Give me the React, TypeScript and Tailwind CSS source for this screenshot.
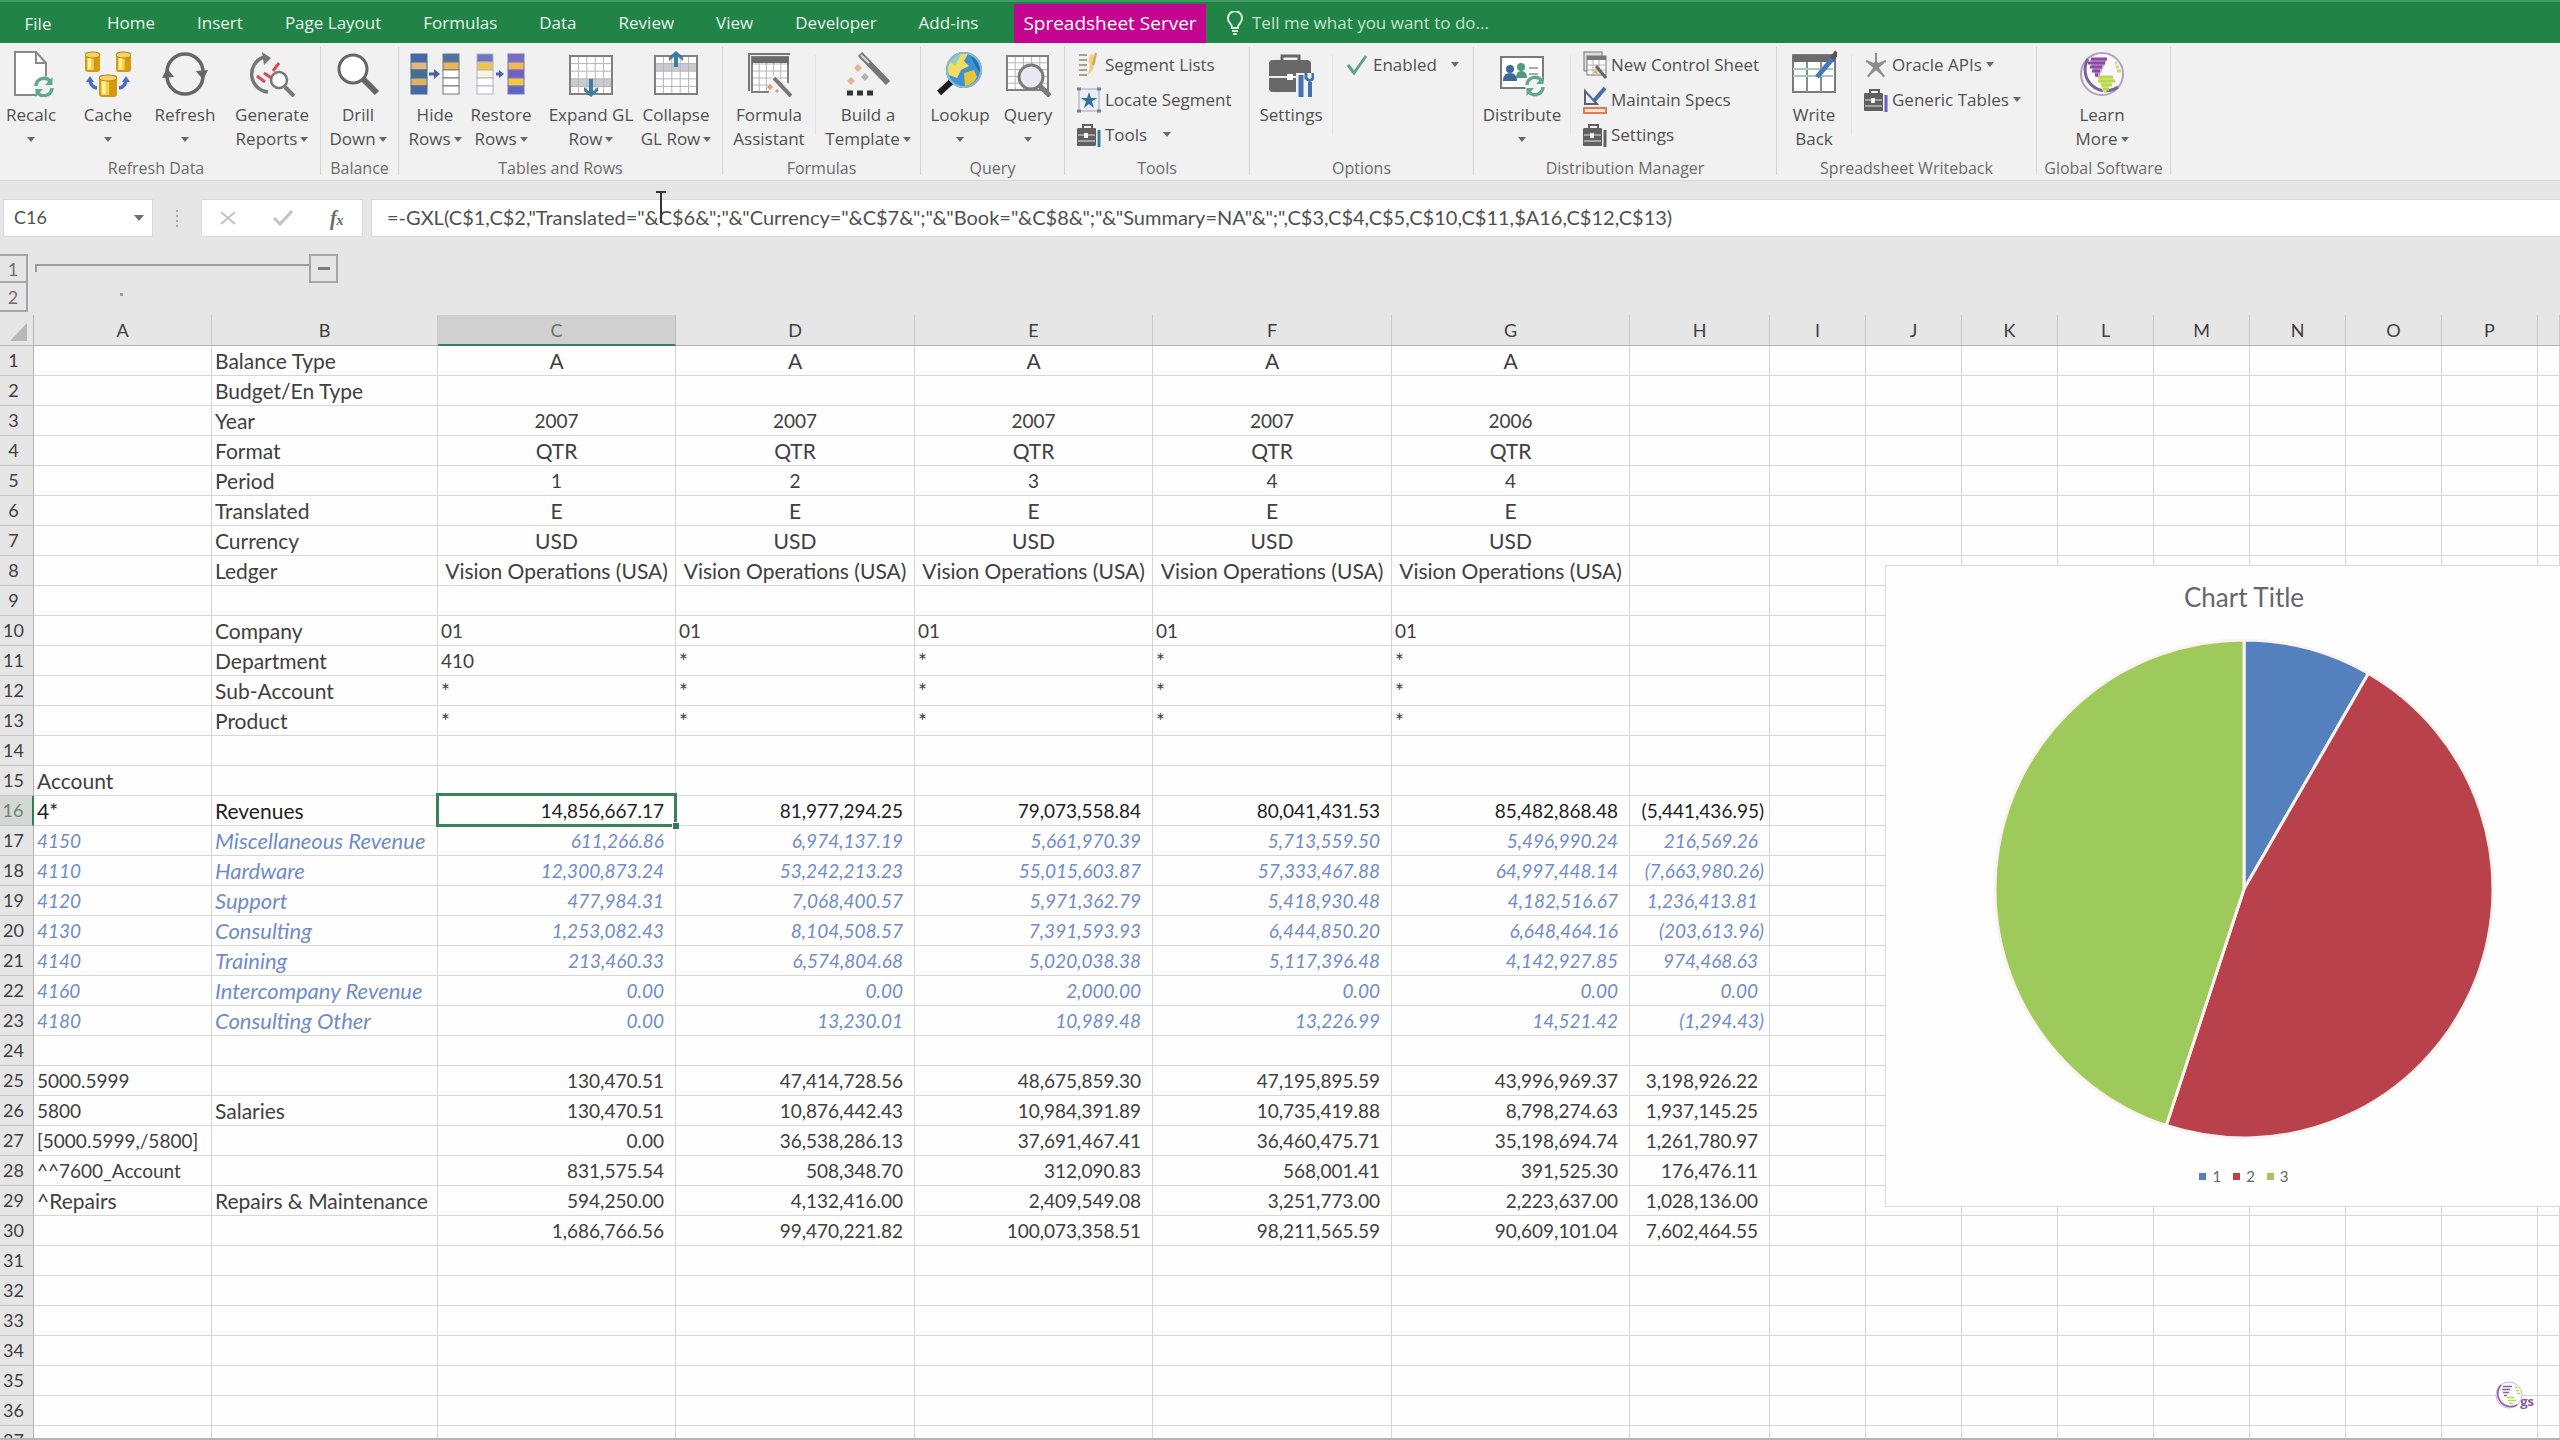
import type { ReactNode } from "react";

const GRAY = "#666666";

/* ---------- icons ---------- */

function Icon({ children, w = 46, h = 46 }: { children: ReactNode; w?: number; h?: number }) {
  return (
    <svg width={w} height={h} viewBox={`0 0 ${w} ${h}`} fill="none" aria-hidden="true" className="shrink-0">
      {children}
    </svg>
  );
}

function Caret() {
  return (
    <svg width="8" height="5" viewBox="0 0 8 5" aria-hidden="true" className="shrink-0">
      <path d="M0 0H8L4 5Z" fill="#6a6a6a" />
    </svg>
  );
}

function Sync({ x, y, r = 8 }: { x: number; y: number; r?: number }) {
  return (
    <g transform={`translate(${x} ${y}) scale(${r / 8})`} stroke="#5fa88c" strokeWidth="3.4">
      <path d="M-8 -1A8 8 0 0 1 6 -6" />
      <path d="M8 1A8 8 0 0 1 -6 6" />
      <path d="M8.500 -10V-2H1Z" fill="#5fa88c" stroke="none" />
      <path d="M-8.500 10V2H-1Z" fill="#5fa88c" stroke="none" />
    </g>
  );
}

function RecalcIcon() {
  return (
    <Icon>
      <path d="M7 1H28L38 12V44H7Z" fill="#fff" stroke="#8a8a8a" strokeWidth="2" />
      <path d="M28 1V12H38" stroke="#8a8a8a" strokeWidth="2" />
      <circle cx="36" cy="36" r="11" fill="#f1f1f1" />
      <Sync x={36} y={36} />
    </Icon>
  );
}

function Cylinder({ x, y, w, h }: { x: number; y: number; w: number; h: number }) {
  return (
    <g>
      <rect x={x} y={y} width={w} height={h} rx="3" fill="#d69a12" />
      <rect x={x + 2} y={y + 2} width={w * 0.45} height={h - 4} fill="#f7cf45" />
      <rect x={x + 3} y={y + 3} width={w * 0.2} height={h - 6} fill="#fff0a8" />
      <ellipse cx={x + w / 2} cy={y + 3} rx={w / 2} ry="3" fill="#f3d469" stroke="#b98512" />
    </g>
  );
}

function CacheIcon() {
  return (
    <Icon>
      <Cylinder x={0} y={1} w={15} h={20} />
      <Cylinder x={31} y={1} w={15} h={20} />
      <path d="M5 28Q5 36 12 37" stroke="#4b6fc6" strokeWidth="3.5" />
      <path d="M1 31L5 25L9 31Z" fill="#4b6fc6" />
      <path d="M41 28Q41 36 34 37" stroke="#4b6fc6" strokeWidth="3.5" />
      <path d="M37 31L41 25L45 31Z" fill="#4b6fc6" />
      <Cylinder x={14} y={24} w={18} h={22} />
    </Icon>
  );
}

function RefreshIcon() {
  return (
    <Icon>
      <path d="M5 21A18 18 0 0 1 41 21" stroke={GRAY} strokeWidth="3.500" />
      <path d="M5 25A18 18 0 0 0 41 25" stroke={GRAY} strokeWidth="3.500" />
      <path d="M0 27L5 17L12 26Z" fill={GRAY} />
      <path d="M34 20L41 29L46 19Z" fill={GRAY} />
    </Icon>
  );
}

function GenerateIcon() {
  return (
    <Icon>
      <path d="M19 41A18 18 0 0 1 15 6" stroke="#777" strokeWidth="3.500" />
      <path d="M13 1L22 7L15 14Z" fill="#777" />
      <path d="M24 20L30 12M8 25L16 31M15 22L24 28" stroke="#d64b5b" strokeWidth="3" />
      <circle cx="30" cy="29" r="8" fill="#fff" stroke="#777" strokeWidth="2.500" />
      <path d="M36 36L45 45" stroke="#777" strokeWidth="4" />
    </Icon>
  );
}

function DrillIcon() {
  return (
    <Icon>
      <circle cx="18" cy="18" r="14" fill="#fff" stroke={GRAY} strokeWidth="3" />
      <path d="M28 28L42 42" stroke={GRAY} strokeWidth="6" />
    </Icon>
  );
}

function Strip({ x, colors, line }: { x: number; colors: string[]; line: string }) {
  return (
    <g>
      {colors.map((c, i) => (
        <rect key={i} x={x} y={3 + i * 8} width="16" height="8" fill={c} stroke={line} strokeWidth="1" />
      ))}
    </g>
  );
}

function HideRowsIcon() {
  return (
    <Icon w={50}>
      <Strip x={1} colors={["#4668a8", "#e3b87a", "#3f7290", "#e3b060", "#4668a8"]} line="#4a6a9a" />
      <Strip x={33} colors={["#4c73a6", "#e6b560", "#fff", "#fff", "#fff"]} line="#777" />
      <path d="M19 23H26" stroke="#4a5fa0" strokeWidth="3" />
      <path d="M24 18L30 23L24 28Z" fill="#4a5fa0" />
    </Icon>
  );
}

function RestoreRowsIcon() {
  return (
    <Icon w={50}>
      <Strip x={1} colors={["#6e74c0", "#f2c24e", "#fdf3dd", "#fff", "#fff"]} line="#a9b3cc" />
      <Strip x={32} colors={["#7a6cc6", "#f0b84d", "#6b62c4", "#f2cb3c", "#5c66c0"]} line="#7a72c4" />
      <path d="M20 23H25" stroke="#4a5fb0" strokeWidth="3" />
      <path d="M23 19L28 23L23 27Z" fill="#4a5fb0" />
    </Icon>
  );
}

function Grid({ x, y, w, h, shade }: { x: number; y: number; w: number; h: number; shade?: number }) {
  const cw = w / 5;
  const rh = h / 5;
  return (
    <g>
      <rect x={x} y={y} width={w} height={h} fill="#fff" />
      {shade !== undefined && <rect x={x} y={y + rh * shade} width={w} height={rh} fill="#c9ccd3" />}
      <path
        d={[1, 2, 3, 4].map((i) => `M${x + cw * i} ${y}V${y + h}M${x} ${y + rh * i}H${x + w}`).join("")}
        stroke="#b5b5b5"
      />
      <rect x={x} y={y} width={w} height={h} stroke="#808080" strokeWidth="2" />
    </g>
  );
}

function ExpandIcon() {
  return (
    <Icon>
      <Grid x={2} y={5} w={42} h={38} shade={3} />
      <path d="M23 28V44" stroke="#3f7ca3" strokeWidth="4" />
      <path d="M16 36L23 42L30 36V40L23 46L16 40Z" fill="#3f7ca3" />
    </Icon>
  );
}

function CollapseIcon() {
  return (
    <Icon>
      <Grid x={2} y={5} w={42} h={38} shade={1} />
      <path d="M23 2V16" stroke="#3f7ca3" strokeWidth="4" />
      <path d="M16 10L23 4L30 10V6L23 0L16 6Z" fill="#3f7ca3" />
    </Icon>
  );
}

function FormulaIcon() {
  return (
    <Icon>
      <path d="M3 40V3H44" stroke="#777" strokeWidth="2" />
      <Grid x={6} y={6} w={36} h={35} />
      <rect x="6" y="6" width="37" height="6" fill="#6a6a6a" />
      <path d="M22 46L26 24L46 34V46Z" fill="#f1f1f1" />
      <path d="M28 27L45 45" stroke="#777" strokeWidth="4" />
      <path d="M24 33L27 36L24 39L21 36ZM31 38L33 40L31 42L29 40Z" fill="#d6a07c" />
    </Icon>
  );
}

function BuildIcon() {
  return (
    <Icon>
      <path d="M15 3L43 32" stroke="#777" strokeWidth="6" />
      <path d="M16 4L24 12" stroke="#ddd" strokeWidth="2" />
      <path d="M13 13L17 17L13 21L9 17ZM6 26L10 30L6 34L2 30Z" fill="#e7b491" />
      <path d="M20 22L24 26L20 30L16 26Z" fill="#b3b3b3" />
      <path d="M2 42H8M12 42H18M22 42H28" stroke="#333" strokeWidth="5" />
    </Icon>
  );
}

function LookupIcon() {
  return (
    <Icon>
      <path d="M2 42L14 31" stroke="#1c1c1c" strokeWidth="6" />
      <circle cx="27" cy="19" r="18" fill="#3d93cf" />
      <path d="M15 8Q23 0 31 3L27 10L32 15L24 19L20 27L12 24Q8 15 15 8Z" fill="#f2dc63" />
      <path d="M27 22L37 19L40 26Q36 34 28 35Z" fill="#e8c33c" />
      <path d="M34 5Q44 11 43 22L38 14Z" fill="#256fb0" />
      <path d="M13 11Q17 4 24 4L18 14Z" fill="#8ed0c4" />
      <circle cx="27" cy="19" r="17" stroke="#8bb8c9" strokeWidth="2" />
    </Icon>
  );
}

function QueryIcon() {
  return (
    <Icon>
      <Grid x={2} y={5} w={41} h={34} />
      <circle cx="26" cy="26" r="12" fill="#e6e8f3" stroke="#7b7b7b" strokeWidth="3" />
      <path d="M35 35L45 45" stroke="#7b7b7b" strokeWidth="5" />
    </Icon>
  );
}

function SettingsIcon() {
  return (
    <Icon>
      <path d="M14 9V5H31V9" stroke="#686868" strokeWidth="3" />
      <rect x="1" y="9" width="42" height="32" rx="4" fill="#686868" />
      <path d="M1 26H43" stroke="#f1f1f1" strokeWidth="2" />
      <rect x="19" y="23" width="6" height="6" fill="#fff" />
      <rect x="28" y="22" width="18" height="24" fill="#f1f1f1" />
      <path d="M33 24V46" stroke="#3f71b3" strokeWidth="5" />
      <path d="M42 31V46" stroke="#3f71b3" strokeWidth="4" />
      <path d="M38 22V27Q42 32 45 27V22" stroke="#3f71b3" strokeWidth="3" />
    </Icon>
  );
}

function DistributeIcon() {
  return (
    <Icon>
      <rect x="2" y="6" width="42" height="31" fill="#fff" stroke="#7b7b7b" strokeWidth="2" />
      <circle cx="11" cy="18" r="4" fill="#3d6a9e" />
      <path d="M4 30Q4 22 11 22Q18 22 18 30Z" fill="#3d6a9e" />
      <circle cx="22" cy="16" r="4" fill="#4f9b7c" />
      <path d="M17 27Q17 20 22 20Q28 20 28 27Z" fill="#4f9b7c" />
      <path d="M30 17H39M30 23H39" stroke="#aaa" strokeWidth="2" />
      <circle cx="36" cy="35" r="10" fill="#f1f1f1" />
      <Sync x={36} y={35} />
    </Icon>
  );
}

function WriteIcon() {
  return (
    <Icon>
      <rect x="2" y="4" width="42" height="37" fill="#fff" stroke="#7b7b7b" strokeWidth="2" />
      <rect x="2" y="4" width="42" height="7" fill="#6b6b6b" />
      <path d="M16 11V41M30 11V41" stroke="#8c8c8c" strokeWidth="2" />
      <path d="M2 18H42M2 25H42" stroke="#a5c9bb" strokeWidth="2" />
      <path d="M26 26L43 6" stroke="#4479bd" strokeWidth="5" />
      <path d="M41 8L46 1" stroke="#555" strokeWidth="5" />
    </Icon>
  );
}

function SegmentIcon() {
  return (
    <Icon w={24} h={28}>
      <path d="M2 4H10M2 9H10M2 14H10M2 19H10M2 24H10" stroke="#a9a28f" strokeWidth="2" />
      <path d="M14 3Q20 5 19 10L15 20L11 24L13 14Q10 8 14 3Z" fill="#edcf83" />
      <path d="M19 2L16 14" stroke="#c9a95c" strokeWidth="2" />
    </Icon>
  );
}

function LocateIcon() {
  return (
    <Icon w={24} h={28}>
      <rect x="2" y="3" width="20" height="22" fill="#e9edf6" stroke="#9aa6bd" />
      <path d="M12 6L14 12H20L15 15.500L17 22L12 18L7 22L9 15.500L4 12H10Z" fill="#33719c" />
      <path d="M0 3H4M20 3H24M0 25H4M20 25H24" stroke="#77808f" strokeWidth="3" />
    </Icon>
  );
}

function ToolboxIcon({ accent }: { accent: string }) {
  return (
    <Icon w={24} h={28}>
      <path d="M6 8V4H15V8" stroke="#606060" strokeWidth="2" />
      <rect x="0" y="7" width="19" height="18" rx="1" fill="#606060" />
      <path d="M1 14H18M1 20H18" stroke="#e4e4e4" strokeWidth="1" />
      <rect x="7" y="12" width="4" height="5" fill="#fff" />
      <path d="M22 9V26" stroke={accent} strokeWidth="3" />
    </Icon>
  );
}

function CheckIcon() {
  return (
    <Icon w={24} h={28}>
      <path d="M3 14L9 22L21 5" stroke="#5ba286" strokeWidth="3" />
    </Icon>
  );
}

function NewSheetIcon() {
  return (
    <Icon w={24} h={28}>
      <rect x="1" y="1" width="18" height="19" fill="#ddd" stroke="#777" />
      <rect x="4" y="5" width="19" height="19" fill="#fff" stroke="#777" />
      <rect x="4" y="5" width="19" height="4" fill="#777" />
      <path d="M10 9V24M16 9V24M4 14H23M4 19H23" stroke="#b0b0b0" />
      <path d="M13 15L23 27" stroke="#666" strokeWidth="3" />
      <path d="M10 22L13 18L15 23Z" fill="#e2ac59" />
    </Icon>
  );
}

function SpecsIcon() {
  return (
    <Icon w={24} h={28}>
      <path d="M2 18V5L14 18Z" stroke="#5b5f77" strokeWidth="2" />
      <path d="M11 15L22 2" stroke="#466fae" strokeWidth="4" />
      <rect x="1" y="22" width="22" height="5" fill="#fbe2d8" stroke="#e07a55" strokeWidth="2" />
    </Icon>
  );
}

function OracleIcon() {
  return (
    <Icon w={24} h={28}>
      <path
        d="M12 2V14M2 10L12 14L22 10M12 14L4 26M12 14L20 26M3 10L20 25M21 10L4 25"
        stroke="#8e8e8e"
        strokeWidth="2"
      />
      <circle cx="12" cy="14" r="3" fill="#8a8a8a" />
    </Icon>
  );
}

function GlobeIcon() {
  return (
    <Icon w={48}>
      <circle cx="24" cy="23" r="21" fill="#fbf8fd" stroke="#b3a0c2" strokeWidth="2" />
      <path d="M10 8A21 21 0 0 0 40 36" stroke="#7a6590" strokeWidth="3" />
      <path d="M12 9L29 8L21 26H18Z" fill="#c79bd0" />
      <path d="M13 8H29M10 12H27M12 16H24M14 20H22M17 24H20" stroke="#8c4a9e" strokeWidth="3" />
      <path d="M20 26H36L28 41H25Z" fill="#d9ea94" />
      <path d="M20 26H35M20 30H37M23 34H34M25 38H31" stroke="#b7d84b" strokeWidth="3" />
      <path d="M37 12H39M38 16H41M39 20H43" stroke="#c6dd6e" strokeWidth="3" />
    </Icon>
  );
}

/* ---------- ribbon ---------- */

function BigButton({
  icon,
  line1,
  line2 = "",
  caret = true,
  className,
}: {
  icon: ReactNode;
  line1: string;
  line2?: string;
  caret?: boolean;
  className: string;
}) {
  return (
    <button type="button" className={`flex shrink-0 flex-col items-center pt-2 ${className}`}>
      {icon}
      <span className="mt-1.5 h-6 leading-6 whitespace-nowrap">{line1}</span>
      <span className="flex h-6 items-center gap-[3px] leading-6 whitespace-nowrap">
        {line2}
        {caret && <Caret />}
      </span>
    </button>
  );
}

function SmallButton({ icon, label, caret = "" }: { icon: ReactNode; label: string; caret?: string }) {
  return (
    <button type="button" className="flex h-[35px] items-center gap-1 whitespace-nowrap">
      {icon}
      {label}
      {caret && (
        <span className={caret}>
          <Caret />
        </span>
      )}
    </button>
  );
}

function Group({ label, className, children }: { label: string; className: string; children: ReactNode }) {
  return (
    <section aria-label={label} className={`flex shrink-0 flex-col ${className}`}>
      <div className="flex h-[113px]">{children}</div>
      <div className="h-6 text-center text-base leading-6 whitespace-nowrap text-[#6b6b6b]">{label}</div>
    </section>
  );
}

function Divider({ short = false }: { short?: boolean }) {
  return short ? (
    <div className="mt-3 h-20 w-px shrink-0 bg-[#e4e4e4]" />
  ) : (
    <div className="mt-1 h-32 w-px shrink-0 bg-[#d4d4d4]" />
  );
}

function Ribbon() {
  return (
    <div className="flex h-[138px] shrink-0 overflow-hidden border-b border-[#d6d6d6] bg-[#f1f1f1] text-[17px] text-[#505050]">
      <Group label="Refresh Data" className="w-[320px] pr-2">
        <BigButton className="w-[62px]" icon={<RecalcIcon />} line1="Recalc" />
        <BigButton className="w-[92px]" icon={<CacheIcon />} line1="Cache" />
        <BigButton className="w-[62px]" icon={<RefreshIcon />} line1="Refresh" />
        <BigButton className="w-[104px] pl-2" icon={<GenerateIcon />} line1="Generate" line2="Reports" />
      </Group>
      <Divider />
      <Group label="Balance" className="w-[77px]">
        <BigButton className="w-[74px]" icon={<DrillIcon />} line1="Drill" line2="Down" />
      </Group>
      <Divider />
      <Group label="Tables and Rows" className="w-[323px]">
        <BigButton className="w-[72px]" icon={<HideRowsIcon />} line1="Hide" line2="Rows" />
        <BigButton className="w-[60px]" icon={<RestoreRowsIcon />} line1="Restore" line2="Rows" />
        <BigButton className="w-[120px]" icon={<ExpandIcon />} line1="Expand GL" line2="Row" />
        <BigButton className="w-[50px]" icon={<CollapseIcon />} line1="Collapse" line2="GL Row" />
      </Group>
      <Divider />
      <Group label="Formulas" className="w-[197px]">
        <BigButton className="w-[92px]" icon={<FormulaIcon />} line1="Formula" line2="Assistant" caret={false} />
        <Divider short />
        <BigButton className="w-[104px]" icon={<BuildIcon />} line1="Build a" line2="Template" />
      </Group>
      <Divider />
      <Group label="Query" className="w-[143px]">
        <BigButton className="w-[78px]" icon={<LookupIcon />} line1="Lookup" />
        <BigButton className="w-[58px]" icon={<QueryIcon />} line1="Query" />
      </Group>
      <Divider />
      <Group label="Tools" className="w-[184px]">
        <div className="flex flex-col items-start pt-1 pl-3">
          <SmallButton icon={<SegmentIcon />} label="Segment Lists" />
          <SmallButton icon={<LocateIcon />} label="Locate Segment" />
          <SmallButton icon={<ToolboxIcon accent="#3b7ca6" />} label="Tools" caret="ml-3" />
        </div>
      </Group>
      <Divider />
      <Group label="Options" className="w-[223px]">
        <BigButton className="w-[82px]" icon={<SettingsIcon />} line1="Settings" caret={false} />
        <Divider short />
        <div className="flex flex-col items-start pt-1 pl-3">
          <SmallButton icon={<CheckIcon />} label="Enabled" caret="ml-2.5" />
        </div>
      </Group>
      <Divider />
      <Group label="Distribution Manager" className="w-[302px]">
        <BigButton className="w-[96px]" icon={<DistributeIcon />} line1="Distribute" />
        <Divider short />
        <div className="flex flex-col items-start pt-1 pl-3">
          <SmallButton icon={<NewSheetIcon />} label="New Control Sheet" />
          <SmallButton icon={<SpecsIcon />} label="Maintain Specs" />
          <SmallButton icon={<ToolboxIcon accent="#606060" />} label="Settings" />
        </div>
      </Group>
      <Divider />
      <Group label="Spreadsheet Writeback" className="w-[259px]">
        <BigButton className="w-[74px]" icon={<WriteIcon />} line1="Write" line2="Back" caret={false} />
        <Divider short />
        <div className="flex flex-col items-start pt-1 pl-3">
          <SmallButton icon={<OracleIcon />} label="Oracle APIs" caret="ml-0" />
          <SmallButton icon={<ToolboxIcon accent="#6a5cc0" />} label="Generic Tables" caret="ml-0" />
        </div>
      </Group>
      <Divider />
      <Group label="Global Software" className="w-[133px]">
        <BigButton className="w-[130px]" icon={<GlobeIcon />} line1="Learn" line2="More" />
      </Group>
      <Divider />
    </div>
  );
}

function TabBar() {
  return (
    <nav className="flex h-[43px] shrink-0 items-stretch border-t-2 border-[#3f9a66] bg-[#218346] text-[17px] text-[#e6f3ea]">
      <button type="button" className="w-[86px] pt-0.5 pr-2.5">
        File
      </button>
      <div className="flex w-[928px]">
        {["Home", "Insert", "Page Layout", "Formulas", "Data", "Review", "View", "Developer", "Add-ins"].map((t) => (
          <button key={t} type="button" className="px-[21px] whitespace-nowrap">
            {t}
          </button>
        ))}
      </div>
      <button type="button" className="mt-0.5 w-[192px] bg-[#c3058f] text-[19px] whitespace-nowrap text-white">
        Spreadsheet Server
      </button>
      <label className="flex flex-1 items-center gap-2 pl-5">
        <svg width="18" height="24" viewBox="0 0 18 24" fill="none" stroke="#d5ecdc" strokeWidth="2" aria-hidden="true">
          <path d="M6 17Q6 14 3.500 11.500A7 7 0 1 1 14.500 11.500Q12 14 12 17Z" />
          <path d="M6 20H12M7 23H11" />
        </svg>
        <input
          type="text"
          aria-label="Tell me what you want to do"
          placeholder="Tell me what you want to do..."
          className="w-[300px] bg-transparent outline-none placeholder:text-[#c4e3cf]"
        />
      </label>
    </nav>
  );
}

const FORMULA =
  '=-GXL(C$1,C$2,"Translated="&C$6&";"&"Currency="&C$7&";"&"Book="&C$8&";"&"Summary=NA"&";",C$3,C$4,C$5,C$10,C$11,$A16,C$12,C$13)';

function FormulaBar() {
  return (
    <div className="relative flex h-[73px] shrink-0 items-center pl-[3px] font-[Lato,sans-serif] text-[20px] text-[#505050]">
      <div className="flex h-[38px] w-[150px] items-center justify-between border border-[#dadada] bg-white pr-2 pl-2.5">
        <input aria-label="Name box" defaultValue="C16" className="w-24 bg-transparent text-[18px] outline-none" />
        <button type="button" aria-label="Cell names">
          <svg width="10" height="6" viewBox="0 0 10 6" aria-hidden="true">
            <path d="M0 0H10L5 6Z" fill="#707070" />
          </svg>
        </button>
      </div>
      <svg width="4" height="18" viewBox="0 0 4 18" className="mx-[22px]" aria-hidden="true">
        <path d="M2 1V3M2 6V8M2 11V13M2 16V18" stroke="#a8a8a8" strokeWidth="2" />
      </svg>
      <div className="flex h-[38px] w-[162px] items-center justify-around border border-[#dadada] bg-white">
        <button type="button" aria-label="Cancel">
          <svg width="16" height="14" viewBox="0 0 16 14" stroke="#c4c4c4" strokeWidth="2" aria-hidden="true">
            <path d="M1 1L15 13M15 1L1 13" />
          </svg>
        </button>
        <button type="button" aria-label="Enter">
          <svg width="20" height="16" viewBox="0 0 20 16" fill="none" stroke="#c4c4c4" strokeWidth="3" aria-hidden="true">
            <path d="M1 8L7 14L19 1" />
          </svg>
        </button>
        <button
          type="button"
          aria-label="Insert function"
          className="font-['Liberation_Serif',serif] text-xl font-bold text-[#6a6a6a] italic"
        >
          f<span className="text-sm">x</span>
        </button>
      </div>
      <input
        aria-label="Formula"
        defaultValue={FORMULA}
        className="ml-2 h-[38px] flex-1 border border-r-0 border-[#dadada] bg-white pb-0.5 pl-[15px] outline-none"
      />
      <svg
        width="12"
        height="34"
        viewBox="0 0 12 34"
        fill="none"
        stroke="#333"
        strokeWidth="2"
        className="absolute top-[10px] left-[655px]"
        aria-hidden="true"
      >
        <path d="M1 1H11M6 2V32" />
      </svg>
    </div>
  );
}

function OutlineBar() {
  const box = "flex h-[29px] items-center justify-center border-2 border-[#a6a6a6]";
  return (
    <div className="flex h-[61px] shrink-0 items-start font-[Lato,sans-serif] text-lg text-[#707070]">
      <div className="flex w-[35px] flex-col items-start">
        <button type="button" className={`${box} w-7 border-l-0`}>
          1
        </button>
        <button type="button" className={`${box} w-7 border-t-0 border-l-0`}>
          2
        </button>
      </div>
      <div className="flex flex-col">
        <div className="flex items-start">
          <div className="mt-[10px] h-2 w-[274px] border-t-2 border-l-2 border-[#9c9c9c]" />
          <button type="button" aria-label="Collapse columns" className={`${box} w-[29px]`}>
            <span className="h-[3px] w-3 bg-[#7c7c7c]" />
          </button>
        </div>
        <span className="mt-2.5 ml-[85px] size-[3px] bg-[#a0a0a0]" />
      </div>
    </div>
  );
}

/* ---------- sheet ---------- */

const V = "Vision Operations (USA)";
const ROWS: Record<number, string[]> = {
  1: ["", "Balance Type", "A", "A", "A", "A", "A"],
  2: ["", "Budget/En Type"],
  3: ["", "Year", "2007", "2007", "2007", "2007", "2006"],
  4: ["", "Format", "QTR", "QTR", "QTR", "QTR", "QTR"],
  5: ["", "Period", "1", "2", "3", "4", "4"],
  6: ["", "Translated", "E", "E", "E", "E", "E"],
  7: ["", "Currency", "USD", "USD", "USD", "USD", "USD"],
  8: ["", "Ledger", V, V, V, V, V],
  10: ["", "Company", "01", "01", "01", "01", "01"],
  11: ["", "Department", "410", "*", "*", "*", "*"],
  12: ["", "Sub-Account", "*", "*", "*", "*", "*"],
  13: ["", "Product", "*", "*", "*", "*", "*"],
  15: ["Account"],
  16: ["4*", "Revenues", "14,856,667.17", "81,977,294.25", "79,073,558.84", "80,041,431.53", "85,482,868.48", "(5,441,436.95)"],
  17: ["4150", "Miscellaneous Revenue", "611,266.86", "6,974,137.19", "5,661,970.39", "5,713,559.50", "5,496,990.24", "216,569.26"],
  18: ["4110", "Hardware", "12,300,873.24", "53,242,213.23", "55,015,603.87", "57,333,467.88", "64,997,448.14", "(7,663,980.26)"],
  19: ["4120", "Support", "477,984.31", "7,068,400.57", "5,971,362.79", "5,418,930.48", "4,182,516.67", "1,236,413.81"],
  20: ["4130", "Consulting", "1,253,082.43", "8,104,508.57", "7,391,593.93", "6,444,850.20", "6,648,464.16", "(203,613.96)"],
  21: ["4140", "Training", "213,460.33", "6,574,804.68", "5,020,038.38", "5,117,396.48", "4,142,927.85", "974,468.63"],
  22: ["4160", "Intercompany Revenue", "0.00", "0.00", "2,000.00", "0.00", "0.00", "0.00"],
  23: ["4180", "Consulting Other", "0.00", "13,230.01", "10,989.48", "13,226.99", "14,521.42", "(1,294.43)"],
  25: ["5000.5999", "", "130,470.51", "47,414,728.56", "48,675,859.30", "47,195,895.59", "43,996,969.37", "3,198,926.22"],
  26: ["5800", "Salaries", "130,470.51", "10,876,442.43", "10,984,391.89", "10,735,419.88", "8,798,274.63", "1,937,145.25"],
  27: ["[5000.5999,/5800]", "", "0.00", "36,538,286.13", "37,691,467.41", "36,460,475.71", "35,198,694.74", "1,261,780.97"],
  28: ["^^7600_Account", "", "831,575.54", "508,348.70", "312,090.83", "568,001.41", "391,525.30", "176,476.11"],
  29: ["^Repairs", "Repairs & Maintenance", "594,250.00", "4,132,416.00", "2,409,549.08", "3,251,773.00", "2,223,637.00", "1,028,136.00"],
  30: ["", "", "1,686,766.56", "99,470,221.82", "100,073,358.51", "98,211,565.59", "90,609,101.04", "7,602,464.55"],
};

const COLS = "ABCDEFGHIJKLMNOPQ".split("");
const WIDTHS = [
  "w-[178px]", "w-[226px]", "w-[238px]", "w-[239px]", "w-[238px]", "w-[239px]", "w-[238px]", "w-[140px]",
  "w-[96px]", "w-[96px]", "w-[96px]", "w-[96px]", "w-[96px]", "w-[96px]", "w-[96px]", "w-[96px]", "",
];

function alignClass(row: number, col: number, text: string) {
  if (col < 2 || (row >= 10 && row <= 13)) return "pl-[3px] text-left";
  if (row < 10) return "text-center";
  if (text.endsWith(")")) return "pr-[5px] text-right";
  return "pr-[11px] text-right";
}

function sizeClass(text: string, italic: boolean) {
  if (!/[A-Z*]/i.test(text) || /\d{4}/.test(text)) return "text-[19px]";
  return italic ? "text-[22px]" : "text-[21px]";
}

function Sheet() {
  return (
    <table className="w-full table-fixed border-separate border-spacing-0 bg-[#fefefe] font-[Lato,sans-serif] text-[19px] leading-[29px] whitespace-nowrap text-[#404040]">
      <colgroup>
        <col className="w-[34px]" />
        {WIDTHS.map((w, i) => (
          <col key={i} className={w} />
        ))}
      </colgroup>
      <thead>
        <tr className="h-[31px] bg-[#e6e6e6] text-[18px] leading-7">
          <th className="border-r border-b border-[#b4b4b4] p-0">
            <svg width="17" height="18" viewBox="0 0 17 18" className="mt-1 ml-2.5" aria-hidden="true">
              <path d="M17 0V18H0Z" fill="#b8b8b8" />
            </svg>
          </th>
          {COLS.map((c, i) => (
            <th
              key={c}
              scope="col"
              className={
                i === 2
                  ? "border-r border-b-2 border-r-[#bcbcbc] border-b-[#3c7d5b] bg-[#d0d0d0] p-0 font-normal text-[#5f7468]"
                  : "border-r border-b border-r-[#c8c8c8] border-b-[#b0b0b0] p-0 font-normal"
              }
            >
              {c === "Q" ? "" : c}
            </th>
          ))}
        </tr>
      </thead>
      <tbody>
        {Array.from({ length: 37 }, (_, k) => k + 1).map((r) => {
          const italic = r >= 17 && r <= 23;
          return (
            <tr
              key={r}
              className={italic ? "h-[30px] text-[#6f8cc8] italic" : r === 16 ? "h-[30px] text-[#1f1f1f]" : "h-[30px]"}
            >
              <th
                scope="row"
                className={
                  r === 16
                    ? "border-r-2 border-b border-r-[#2f7d52] border-b-[#c4c4c4] bg-[#d3d8d5] p-0 pr-1.5 text-[18px] font-normal text-[#6c8577]"
                    : "border-r border-b border-r-[#b0b0b0] border-b-[#c4c4c4] bg-[#e6e6e6] p-0 pr-1.5 text-[18px] font-normal text-[#404040] not-italic"
                }
              >
                {r}
              </th>
              {COLS.map((c, i) => {
                const text = ROWS[r]?.[i] ?? "";
                const active = r === 16 && i === 2;
                return (
                  <td
                    key={c}
                    className={`border-r border-b border-[#d6d6d6] p-0 ${alignClass(r, i, text)} ${sizeClass(text, italic)} ${active ? "relative" : ""}`}
                  >
                    {text}
                    {active && (
                      <>
                        <span className="absolute -inset-x-0.5 -top-[3px] -bottom-0.5 border-3 border-[#3b8258]" />
                        <span className="absolute -right-1 -bottom-1 size-[7px] border-t border-l border-white bg-[#2f7d52]" />
                      </>
                    )}
                  </td>
                );
              })}
            </tr>
          );
        })}
      </tbody>
    </table>
  );
}

/* ---------- pie chart ---------- */

const SLICES = [
  { name: "1", from: 0, to: 30, color: "#5480bd" },
  { name: "2", from: 30, to: 198.2, color: "#b9414b" },
  { name: "3", from: 198.2, to: 360, color: "#9ec95b" },
];

function slicePath(from: number, to: number) {
  const p = (a: number) => {
    const t = (a * Math.PI) / 180;
    return `${250 + 249 * Math.sin(t)} ${250 - 249 * Math.cos(t)}`;
  };
  return `M250 250L${p(from)}A249 249 0 ${to - from > 180 ? 1 : 0} 1 ${p(to)}Z`;
}

function PieChart() {
  return (
    <figure className="absolute top-[250px] left-[1885px] flex h-[642px] w-[718px] flex-col items-center border border-[#dcdcdc] bg-[#fefefe] font-[Lato,sans-serif] text-[#666]">
      <figcaption className="mt-[15px] text-[26px] leading-8">Chart Title</figcaption>
      <svg width="500" height="500" viewBox="0 0 500 500" className="mt-[26px]" role="img" aria-label="Pie chart">
        {SLICES.map((s) => (
          <path key={s.name} d={slicePath(s.from, s.to)} fill={s.color} stroke="#fbf3f0" strokeWidth="3" strokeLinejoin="round" />
        ))}
      </svg>
      <ul className="mt-[25px] flex gap-3 text-[15px] leading-6">
        {SLICES.map((s) => (
          <li key={s.name} className="flex items-center gap-1.5">
            <span className="size-[7px]" style={{ backgroundColor: s.color }} />
            {s.name}
          </li>
        ))}
      </ul>
    </figure>
  );
}

function Watermark() {
  return (
    <div className="absolute right-[26px] bottom-[29px] flex items-end">
      <svg width="28" height="28" viewBox="0 0 28 28" fill="none" aria-hidden="true">
        <circle cx="14" cy="14" r="13" fill="#fefefe" stroke="#c9b3d6" />
        <path d="M6 4A13 13 0 0 0 22 24" stroke="#9257a8" strokeWidth="1.500" />
        <path d="M8 5.500H17M7 8.500H15M8 11.500H14M9 14.500H12" stroke="#9257a8" strokeWidth="1.500" />
        <path d="M12 16.500H19M13 19.500H21M14 22.500H18" stroke="#b5db55" strokeWidth="1.500" />
        <path d="M20 6.500H22M21 9.500H24M22 12.500H25" stroke="#b5db55" strokeWidth="1.500" />
      </svg>
      <span className="-ml-[3px] text-[13px] leading-4 font-bold text-[#8c56a3]">gs</span>
    </div>
  );
}

export default function App() {
  return (
    <div className="flex h-screen flex-col overflow-hidden bg-[#e6e6e6] font-['Open_Sans',sans-serif]">
      <TabBar />
      <Ribbon />
      <FormulaBar />
      <OutlineBar />
      <main className="relative min-h-0 flex-1 overflow-hidden border-b-2 border-[#b4b4b4]">
        <Sheet />
        <PieChart />
        <Watermark />
      </main>
    </div>
  );
}
